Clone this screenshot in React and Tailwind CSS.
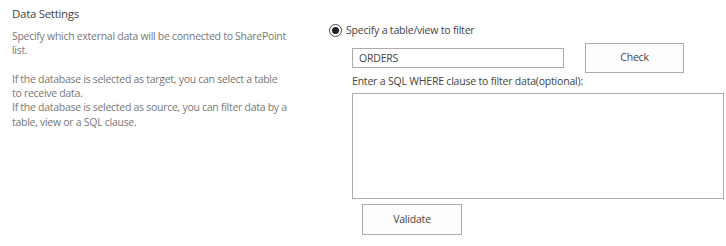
import React, { useState } from "react";

export default function App() {
  const [table, setTable] = useState("ORDERS");
  const [where, setWhere] = useState("");

  return (
    <div className="w-[726px] h-[246px] bg-white text-[#444] font-['Open_Sans',sans-serif] flex">
      {/* description column */}
      <div className="w-[329px] pl-3 pt-[5px]">
        <h3 className="text-[11.5px] leading-[17px] tracking-[-0.3px] text-[#444]">Data Settings</h3>
        <div className="mt-[7px] text-[10.5px] leading-[14.3px] tracking-[-0.28px] text-[#777] whitespace-nowrap">
          <p>
            Specify which external data will be connected to SharePoint
            <br />
            list.
          </p>
          <p className="mt-[14.3px]">
            If the database is selected as target, you can select a table
            <br />
            to receive data.
            <br />
            If the database is selected as source, you can filter data by a
            <br />
            table, view or a SQL clause.
          </p>
        </div>
      </div>

      {/* settings column */}
      <div className="flex-1 pt-[23px] text-[10.5px] tracking-[-0.2px]">
        <label className="flex items-center gap-[4px] leading-[14px] text-[#444]">
          <span className="w-[13px] h-[13px] rounded-full border border-[#444] flex items-center justify-center">
            <span className="w-[7px] h-[7px] rounded-full bg-[#222]" />
          </span>
          Specify a table/view to filter
        </label>

        <div className="pl-[23px]">
          <div className="flex items-center gap-[21px] mt-[6px]">
            <input
              value={table}
              onChange={(e) => setTable(e.target.value)}
              className="w-[212px] h-[20px] border border-[#ababab] px-[6px] text-[10.5px] tracking-[-0.2px] text-[#444] outline-none"
            />
            <button className="w-[99px] h-[30px] border border-[#ababab] bg-[#fdfdfd] text-[10.5px] text-[#444]">
              Check
            </button>
          </div>
          <p className="mt-[1px] leading-[14px] text-[#444]">
            Enter a SQL WHERE clause to filter data(optional):
          </p>
          <textarea
            value={where}
            onChange={(e) => setWhere(e.target.value)}
            className="block mt-[5px] w-[372px] h-[106px] border border-[#ababab] resize-none outline-none"
          />
          <button className="block mt-[5px] ml-[10px] w-[100px] h-[31px] border border-[#ababab] bg-[#fdfdfd] text-[10.5px] text-[#444]">
            Validate
          </button>
        </div>
      </div>
    </div>
  );
}
